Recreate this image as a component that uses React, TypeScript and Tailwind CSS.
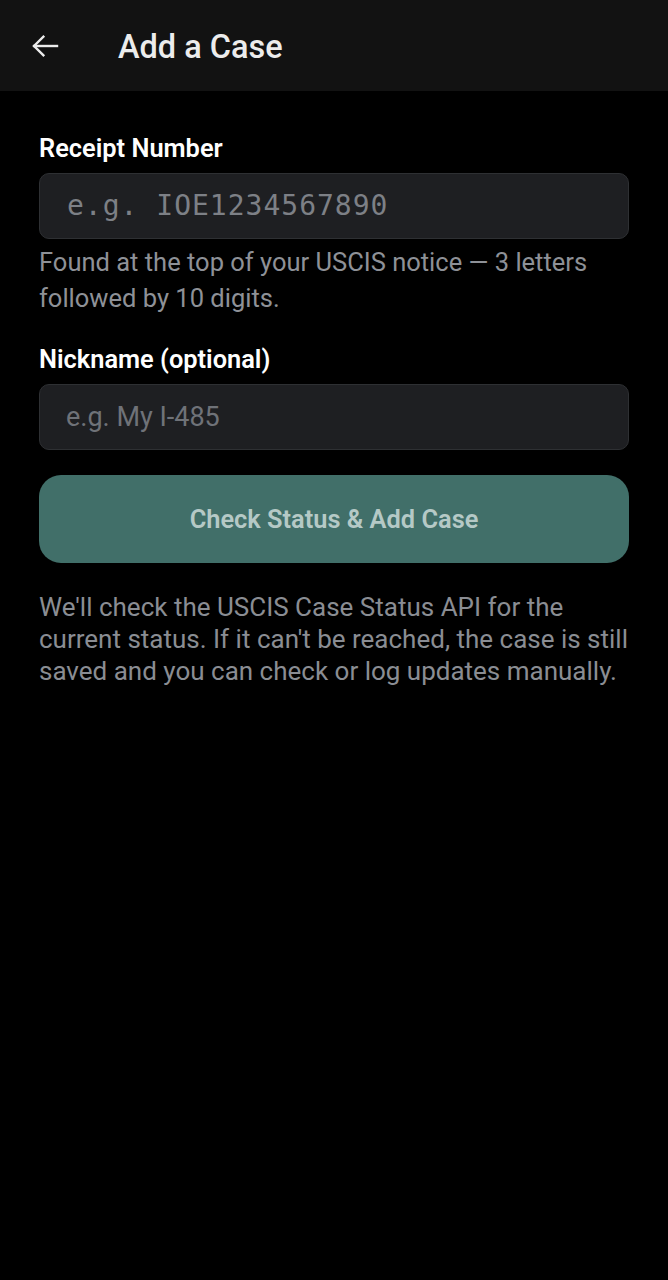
import React from "react";

export default function App() {
  return (
    <div className="min-h-[1280px] w-full bg-black" style={{ fontFamily: "Roboto, 'Noto Sans', sans-serif" }}>
      <header className="flex h-[91px] items-center bg-[#121212]">
        <div className="ml-[29px] flex h-[32px] w-[32px] items-center justify-center">
          <svg width="32" height="32" viewBox="0 0 24 24" fill="none" stroke="#ececec" strokeWidth="1.8" strokeLinecap="square" strokeLinejoin="miter">
            <path d="M21 12H3.8" />
            <path d="M10.8 5L3.8 12L10.8 19" />
          </svg>
        </div>
        <h1 className="ml-[57px] mt-[2px] text-[32.5px] font-medium leading-[40px] text-[#ececec]">Add a Case</h1>
      </header>
      <main className="px-[39px] pt-[42px]">
        <label className="block text-[25.4px] font-semibold leading-[30px] text-white">Receipt Number</label>
        <div className="mt-[10px] flex h-[66px] items-center rounded-[10px] border border-[#2e3033] bg-[#1e1f22] px-[27px]">
          <span
            className="text-[28px] tracking-[1px] text-[#7d8086]"
            style={{ fontFamily: "'DejaVu Sans Mono', 'Liberation Mono', monospace" }}
          >
            e.g. IOE1234567890
          </span>
        </div>
        <p className="mt-[5px] text-[25.5px] leading-[36px] text-[#8e9197]">
          Found at the top of your USCIS notice — 3 letters followed by 10 digits.
        </p>
        <label className="mt-[28px] block text-[25.4px] font-semibold leading-[30px] text-white">Nickname (optional)</label>
        <div className="mt-[10px] flex h-[66px] items-center rounded-[10px] border border-[#2e3033] bg-[#1e1f22] px-[26px]">
          <span className="text-[27px] text-[#6f7278]">e.g. My I-485</span>
        </div>
        <button className="mt-[25px] flex h-[88px] w-full items-center justify-center rounded-[22px] bg-[#416f69] text-[25.4px] font-semibold text-[#b5c9c6]">
          Check Status &amp; Add Case
        </button>
        <p className="mt-[28px] text-[26px] leading-[32px] text-[#8a8d93]">
          We'll check the USCIS Case Status API for the current status. If it can't be reached, the case is still saved and you can check or log updates manually.
        </p>
      </main>
    </div>
  );
}
